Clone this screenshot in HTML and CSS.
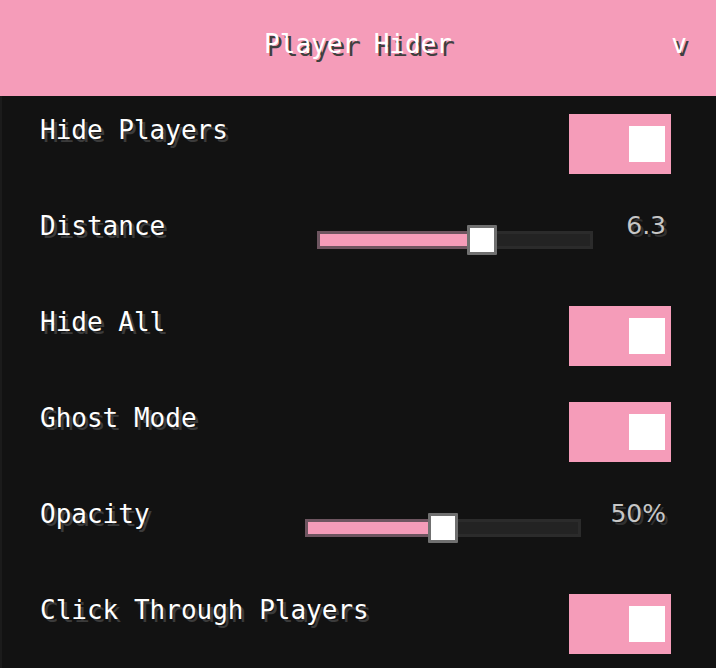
FILE: index.html
```html
<!DOCTYPE html>
<html>
<head>
<meta charset="utf-8">
<link rel="stylesheet" href="styles.css">
</head>
<body>
<div class="panel">
  <header class="header">
    <span class="title">Player Hider</span>
    <span class="chevron">v</span>
  </header>
  <main class="content">
    <div class="row">
      <span class="label">Hide Players</span>
      <div class="toggle"><span class="knob"></span></div>
    </div>
    <div class="row">
      <span class="label">Distance</span>
      <div class="control">
        <div class="track">
          <div class="fill" style="width: calc(60% + 3px)"></div>
          <div class="thumb" style="left: calc(60% - 15px)"></div>
        </div>
        <span class="value">6.3</span>
      </div>
    </div>
    <div class="row">
      <span class="label">Hide All</span>
      <div class="toggle"><span class="knob"></span></div>
    </div>
    <div class="row">
      <span class="label">Ghost Mode</span>
      <div class="toggle"><span class="knob"></span></div>
    </div>
    <div class="row">
      <span class="label">Opacity</span>
      <div class="control">
        <div class="track">
          <div class="fill" style="width: calc(50% + 3px)"></div>
          <div class="thumb" style="left: calc(50% - 15px)"></div>
        </div>
        <span class="value">50%</span>
      </div>
    </div>
    <div class="row">
      <span class="label">Click Through Players</span>
      <div class="toggle"><span class="knob"></span></div>
    </div>
  </main>
</div>
</body>
</html>
```

FILE: styles.css
```css
html, body {
  margin: 0;
  padding: 0;
  background: #121212;
}

.panel {
  width: 716px;
  height: 668px;
  overflow: hidden;
  background: #121212;
  font-family: "DejaVu Sans Mono", "Liberation Mono", monospace;
  font-size: 26px;
  line-height: 30px;
  color: #ffffff;
}

.header {
  height: 96px;
  box-sizing: border-box;
  background: #f59cb9;
  position: relative;
  display: flex;
  justify-content: center;
  padding-top: 29px;
}

.title {
  text-shadow: 3px 3px 0 #3f3f3f;
}

.chevron {
  position: absolute;
  right: 29px;
  top: 29px;
  text-shadow: 3px 3px 0 #3f3f3f;
}

.content {
  height: 572px;
  box-sizing: border-box;
  border-left: 2px solid #1b1b1b;
  padding: 18px 45px 0 38px;
  display: flex;
  flex-direction: column;
  gap: 36px;
}

.row {
  height: 60px;
  display: flex;
  justify-content: space-between;
  align-items: flex-start;
}

.label {
  margin-top: 1px;
  text-shadow: 3px 3px 0 #3b3b3b;
  white-space: nowrap;
}

.toggle {
  width: 102px;
  height: 60px;
  box-sizing: border-box;
  background: #f59cb9;
  padding: 12px 6px;
  display: flex;
  justify-content: flex-end;
}

.knob {
  width: 36px;
  height: 36px;
  background: #ffffff;
}

.control {
  height: 60px;
  display: flex;
  align-items: center;
  gap: 29px;
  padding-right: 5px;
}

.track {
  position: relative;
  width: 276px;
  height: 18px;
  box-sizing: border-box;
  background: #232323;
  border: 3px solid #2b2b2b;
}

.fill {
  position: absolute;
  left: -3px;
  top: -3px;
  height: 18px;
  box-sizing: border-box;
  background: #f59cb9;
  border: 3px solid #6e5560;
}

.thumb {
  position: absolute;
  top: -9px;
  width: 30px;
  height: 30px;
  box-sizing: border-box;
  background: #ffffff;
  border: 3px solid #707070;
  border-radius: 1px;
}

.value {
  align-self: flex-start;
  margin-top: 1px;
  min-width: 44px;
  text-align: right;
  font-family: "DejaVu Sans", "Liberation Sans", sans-serif;
  font-size: 25px;
  color: #c6c6c6;
  text-shadow: 3px 3px 0 #303030;
}
```
